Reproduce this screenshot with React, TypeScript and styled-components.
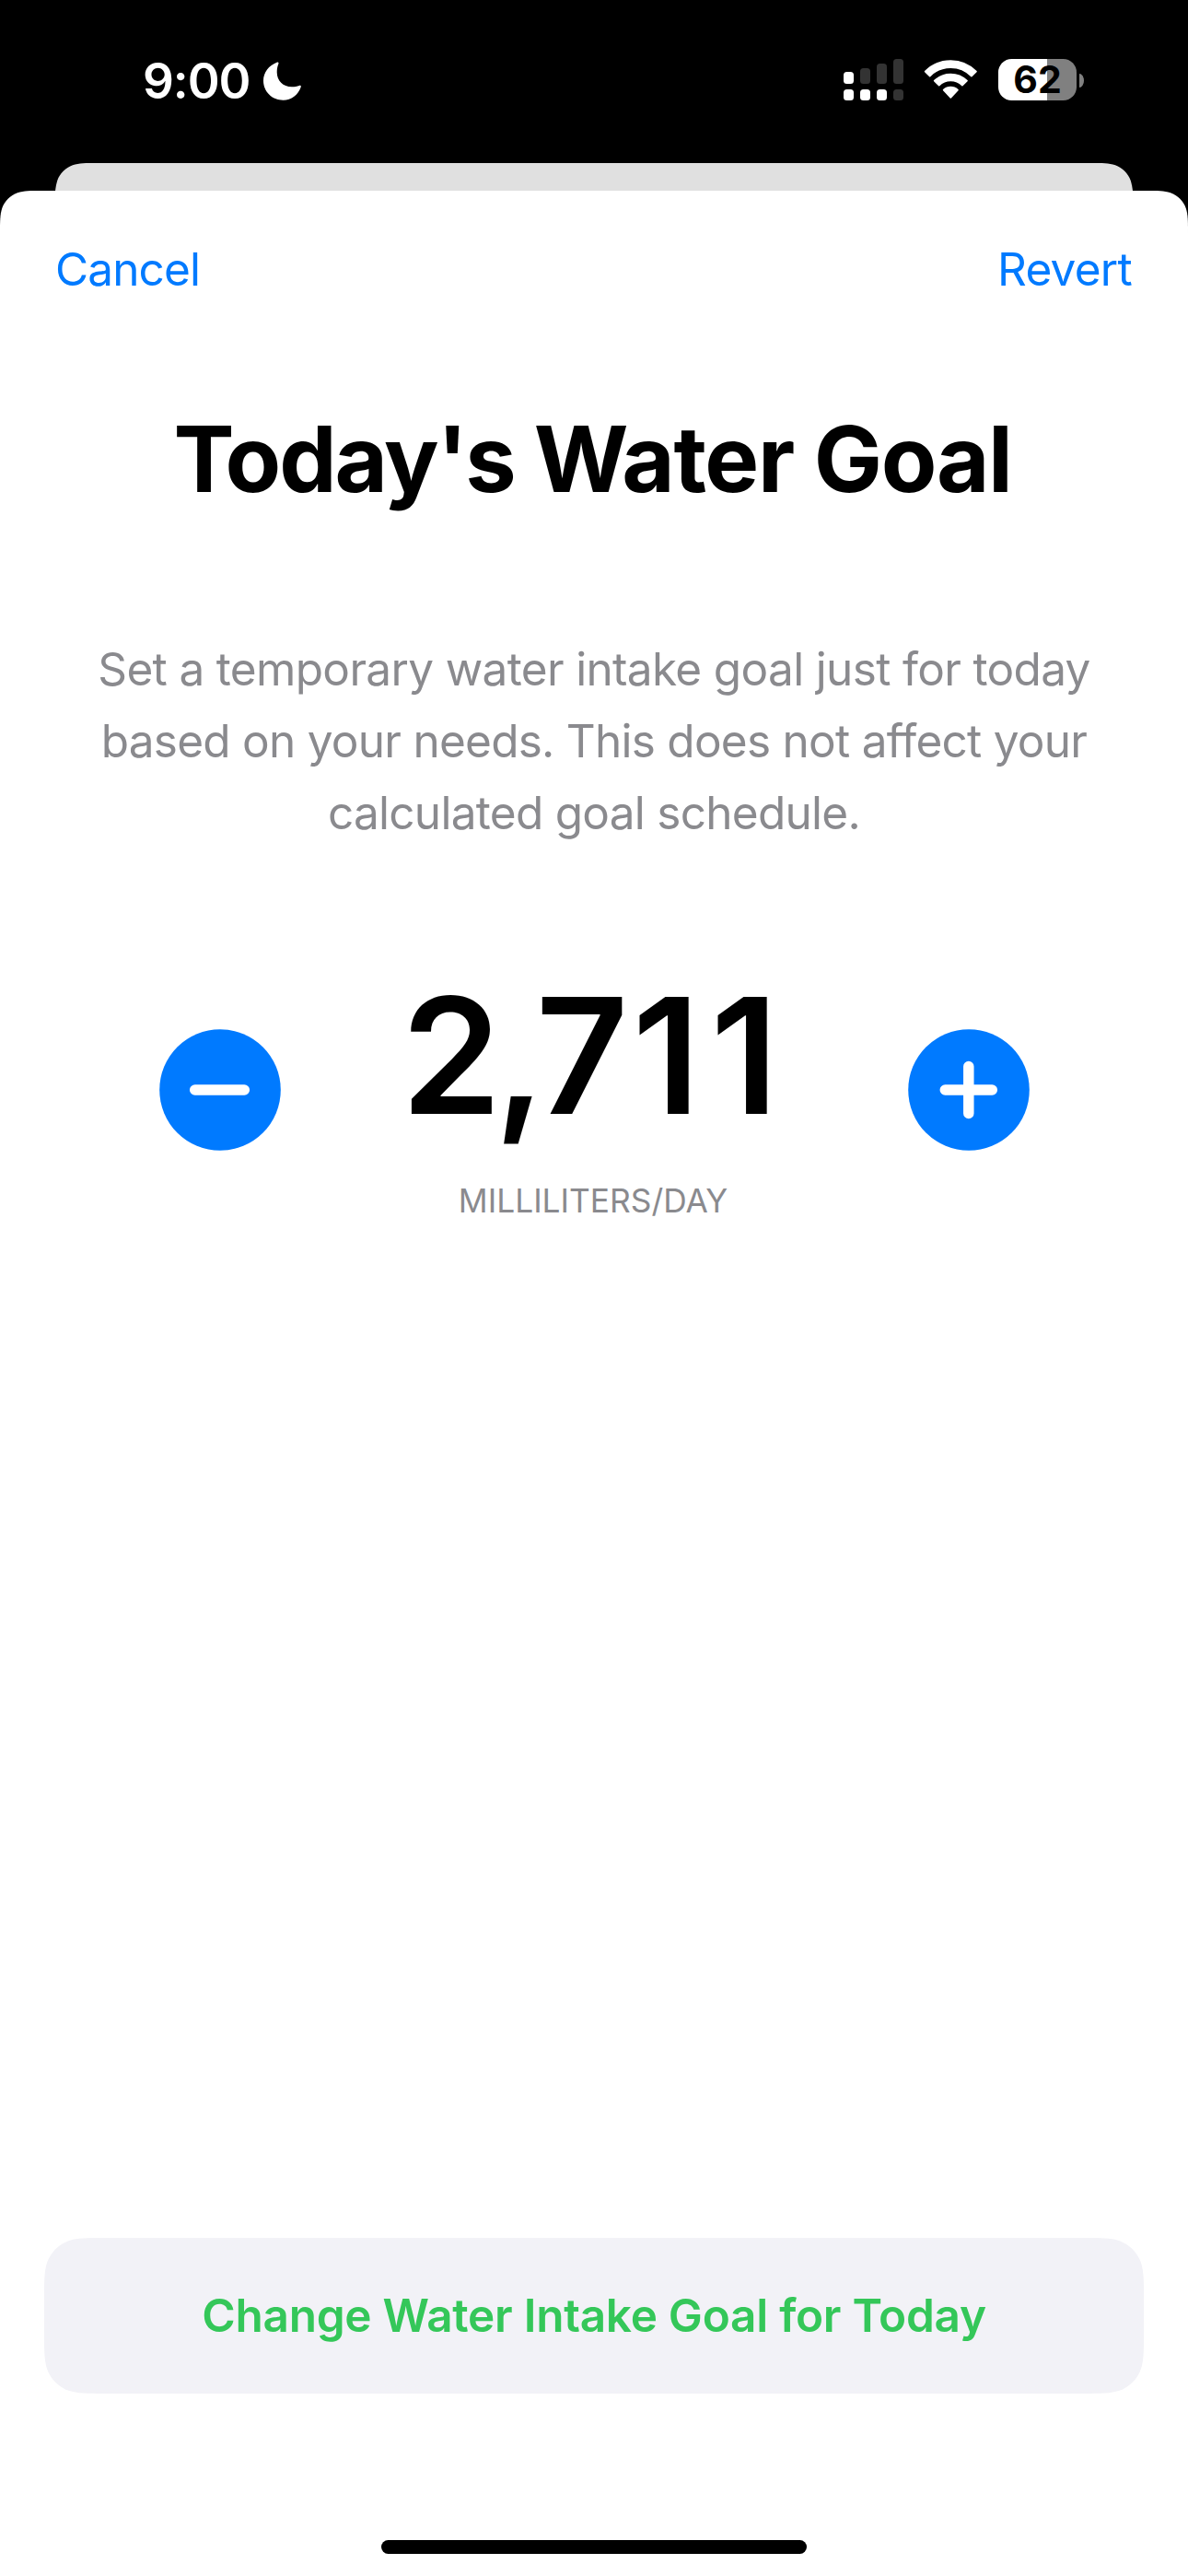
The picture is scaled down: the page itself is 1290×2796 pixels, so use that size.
import React from "react";
import styled, { createGlobalStyle } from "styled-components";

const BLUE = "#007aff";
const GRAY = "#8a8a8e";

/* Continuous-curvature rounded rectangle, as a CSS path() value. */
const squircle = (w: number, h: number, r: number, roundBottom = true) => {
  const a = 1.528665 * r;
  const b = 1.08849296 * r;
  const c = 0.86840694 * r;
  const d = 0.63149379 * r;
  const e = 0.07491139 * r;
  const f = 0.37282383 * r;
  const g = 0.16905956 * r;
  const top =
    `M${a} 0 L${w - a} 0 C${w - b} 0 ${w - c} 0 ${w - d} ${e} ` +
    `C${w - f} ${g} ${w - g} ${f} ${w - e} ${d} C${w} ${c} ${w} ${b} ${w} ${a} `;
  const bottom = roundBottom
    ? `L${w} ${h - a} C${w} ${h - b} ${w} ${h - c} ${w - e} ${h - d} ` +
      `C${w - g} ${h - f} ${w - f} ${h - g} ${w - d} ${h - e} C${w - c} ${h} ${w - b} ${h} ${w - a} ${h} ` +
      `L${a} ${h} C${b} ${h} ${c} ${h} ${d} ${h - e} C${f} ${h - g} ${g} ${h - f} ${e} ${h - d} ` +
      `C0 ${h - c} 0 ${h - b} 0 ${h - a} `
    : `L${w} ${h} L0 ${h} `;
  return (
    `path("${top}${bottom}L0 ${a} C0 ${b} 0 ${c} ${e} ${d} ` +
    `C${g} ${f} ${f} ${g} ${d} ${e} C${c} 0 ${b} 0 ${a} 0 Z")`
  );
};

const GlobalStyle = createGlobalStyle`
  * { box-sizing: border-box; }
  body { margin: 0; background: #000; }
  button { border: 0; margin: 0; padding: 0; background: none; font: inherit; color: inherit; display: block; }
`;

const Screen = styled.div`
  width: 1290px;
  height: 2796px;
  display: flex;
  flex-direction: column;
  background: #000;
  overflow: hidden;
  font-family: Inter, "Liberation Sans", sans-serif;
`;

const StatusBar = styled.header`
  height: 177px;
  flex: none;
  display: flex;
  justify-content: space-between;
  padding: 0 113px 0 155px;
  color: #fff;
`;

const StatusLeft = styled.div`
  height: 176px;
  display: flex;
  align-items: center;
  gap: 14px;
`;

const Time = styled.span`
  font-size: 53px;
  line-height: 64px;
  font-weight: 600;
  letter-spacing: -1.05px;
`;

const StatusRight = styled.div`
  height: 173px;
  display: flex;
  align-items: center;
`;

const Signal = styled.div`
  display: grid;
  grid-template-columns: repeat(4, 11px);
  grid-template-rows: 27px 12px;
  gap: 6px 7px;
  align-items: end;
  margin-right: 22px;
`;

const SignalBar = styled.span<{ $height: number; $on: boolean }>`
  height: ${(p) => p.$height}px;
  border-radius: 3.5px;
  background: ${(p) => (p.$on ? "#fff" : "#333")};
`;

const WifiIcon = styled.svg`
  width: 60px;
  height: 45px;
  margin-right: 21px;
`;

const Battery = styled.div`
  width: 85px;
  height: 45px;
  border-radius: 14.5px;
  display: flex;
  justify-content: center;
  background: linear-gradient(to right, #fff 53px, #808080 53px);
`;

const BatteryLevel = styled.span`
  color: #000;
  font-size: 41px;
  line-height: 45px;
  font-weight: 700;
`;

const BatteryNub = styled.span`
  width: 5px;
  height: 15px;
  margin: 2px 0 0 3px;
  border-radius: 0 5px 5px 0 / 0 7.5px 7.5px 0;
  background: #808080;
`;

const BackCard = styled.div`
  height: 30px;
  flex: none;
  margin: 0 60px;
  background: #e0e0e0;
  clip-path: ${squircle(1170, 60, 30)};
`;

const Sheet = styled.main`
  flex: 1;
  display: flex;
  flex-direction: column;
  background: #fff;
  clip-path: ${squircle(1290, 2589, 30, false)};
`;

const NavBar = styled.nav`
  display: flex;
  justify-content: space-between;
  padding: 55px 61px 0 60px;
`;

const NavButton = styled.button<{ $tracking: number }>`
  color: ${BLUE};
  font-size: 49.5px;
  line-height: 60px;
  letter-spacing: ${(p) => p.$tracking}px;
`;

const Tracked = styled.span<{ $tracking: number }>`
  letter-spacing: ${(p) => p.$tracking}px;
`;

const Title = styled.h1`
  margin: 116px 3px 0 0;
  font-size: 99px;
  line-height: 120px;
  font-weight: 700;
  text-align: center;
`;

const Description = styled.p`
  margin: 129px 0 0;
  color: ${GRAY};
  font-size: 49.5px;
  line-height: 78px;
  text-align: center;
`;

const Line = styled(Tracked)`
  display: block;
`;

const Stepper = styled.section`
  display: flex;
  justify-content: space-between;
  align-items: center;
  margin-top: 119px;
  padding: 0 172px 0 173px;
`;

const RoundButton = styled.button`
  width: 132px;
  height: 132px;
`;

const ButtonIcon = styled.svg`
  width: 132px;
  height: 132px;
  display: block;
`;

const Reading = styled.div`
  display: flex;
  flex-direction: column;
  align-items: center;
`;

const Amount = styled.span`
  padding-right: 10px;
  font-size: 174.7px;
  line-height: 211px;
  font-weight: 600;
  font-kerning: none;
`;

const Unit = styled.span`
  margin: 31px 3px 0 0;
  color: ${GRAY};
  font-size: 35.3px;
  line-height: 43px;
`;

const ConfirmButton = styled.button`
  height: 169px;
  margin: auto 48px 0;
  padding-bottom: 1px;
  background: #f2f2f7;
  clip-path: ${squircle(1194, 169, 42)};
  color: #34c759;
  font-size: 49.5px;
  font-weight: 600;
  letter-spacing: -0.25px;
  line-height: 60px;
`;

const HomeIndicator = styled.div`
  width: 462px;
  height: 15px;
  flex: none;
  margin: 159px auto 24px;
  border-radius: 7.5px;
  background: #000;
`;

const signalCells = [
  { height: 13, on: true },
  { height: 17, on: false },
  { height: 22, on: false },
  { height: 27, on: false },
  { height: 12, on: true },
  { height: 12, on: true },
  { height: 12, on: true },
  { height: 12, on: false },
];

/* The two ones keep tabular spacing while the comma is pulled in tight. */
const amountGlyphs = [
  { char: "2", tracking: -7.8 },
  { char: ",", tracking: -10.7 },
  { char: "7", tracking: 4.3 },
  { char: "1", tracking: 11.1 },
  { char: "1", tracking: 0 },
];

const Moon = () => (
  <svg width="41" height="42" viewBox="0 0 41 42">
    <path
      fill="#fff"
      d="M14.6.7C15.9.2 16.9 1 16.4 2.3 15.3 5 14.7 8 14.7 11.2c0 9.5 6.6 16 16.2 16 3 0 5.7-.5 8-1.3 1.4-.5 2.3.3 1.8 1.7C37.8 36 30.4 41.800 21.5 41.800 9.400 41.800 0 32.600 0 20.600 0 11.500 6 3.900 14.600.7Z"
    />
  </svg>
);

export default function App() {
  return (
    <Screen>
      <GlobalStyle />
      <StatusBar>
        <StatusLeft>
          <Time>9:00</Time>
          <Moon />
        </StatusLeft>
        <StatusRight>
          <Signal>
            {signalCells.map((cell, i) => (
              <SignalBar key={i} $height={cell.height} $on={cell.on} />
            ))}
          </Signal>
          <WifiIcon viewBox="0 0 60 45">
            <g fill="#fff" stroke="#fff" strokeWidth="1.6" strokeLinejoin="round">
              <path d="M1.6 13.6A38.8 38.8 0 0 1 57 13.6L51.9 18.7A31.5 31.5 0 0 0 6.7 18.7Z" />
              <path d="M11.6 23.7A25.5 25.5 0 0 1 47 23.7L41.9 28.7A18 18 0 0 0 16.7 28.7Z" />
              <path d="M21.6 33.6A11.5 11.5 0 0 1 37 33.6L29.3 41.9Z" />
            </g>
          </WifiIcon>
          <Battery>
            <BatteryLevel>62</BatteryLevel>
          </Battery>
          <BatteryNub />
        </StatusRight>
      </StatusBar>
      <BackCard />
      <Sheet>
        <NavBar>
          <NavButton $tracking={-0.867}>Cancel</NavButton>
          <NavButton $tracking={-0.729}>Revert</NavButton>
        </NavBar>
        <Title>
          <Tracked $tracking={-2.15}>Today's </Tracked>
          <Tracked $tracking={-1.4}>Water Goal</Tracked>
        </Title>
        <Description>
          <Line $tracking={-0.66}>Set a temporary water intake goal just for today</Line>
          <Line $tracking={-0.74}>based on your needs. This does not affect your</Line>
          <Line $tracking={-0.72}>calculated goal schedule.</Line>
        </Description>
        <Stepper>
          <RoundButton aria-label="Decrease">
            <ButtonIcon viewBox="0 0 132 132">
              <circle cx="66" cy="66" r="65.8" fill={BLUE} />
              <path d="M38.7 66H92.3" stroke="#fff" strokeWidth="11.5" strokeLinecap="round" />
            </ButtonIcon>
          </RoundButton>
          <Reading>
            <Amount>
              {amountGlyphs.map((g, i) => (
                <Tracked key={i} $tracking={g.tracking}>
                  {g.char}
                </Tracked>
              ))}
            </Amount>
            <Unit>MILLILITERS/DAY</Unit>
          </Reading>
          <RoundButton aria-label="Increase">
            <ButtonIcon viewBox="0 0 132 132">
              <circle cx="66" cy="66" r="65.8" fill={BLUE} />
              <path d="M40.3 66H91.3M65.8 40.5V91.5" stroke="#fff" strokeWidth="11.5" strokeLinecap="round" />
            </ButtonIcon>
          </RoundButton>
        </Stepper>
        <ConfirmButton>Change Water Intake Goal for Today</ConfirmButton>
        <HomeIndicator />
      </Sheet>
    </Screen>
  );
}
